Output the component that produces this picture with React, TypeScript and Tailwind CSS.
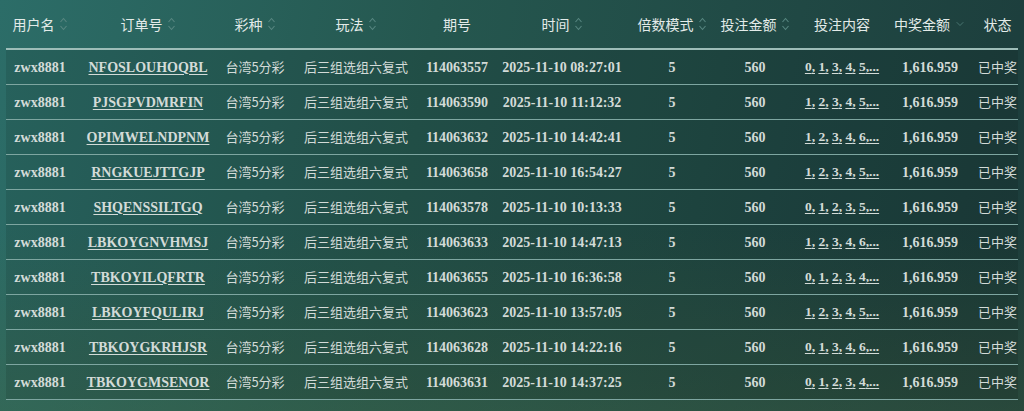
import { ChevronDown } from 'lucide-react';

type Row = {
  user: string;
  order: string;
  issue: string;
  time: string;
  nums: string[];
};

const rows: Row[] = [
  { user: 'zwx8881', order: 'NFOSLOUHOQBL', issue: '114063557', time: '2025-11-10 08:27:01', nums: ['0', '1', '3', '4', '5'] },
  { user: 'zwx8881', order: 'PJSGPVDMRFIN', issue: '114063590', time: '2025-11-10 11:12:32', nums: ['1', '2', '3', '4', '5'] },
  { user: 'zwx8881', order: 'OPIMWELNDPNM', issue: '114063632', time: '2025-11-10 14:42:41', nums: ['1', '2', '3', '4', '6'] },
  { user: 'zwx8881', order: 'RNGKUEJTTGJP', issue: '114063658', time: '2025-11-10 16:54:27', nums: ['1', '2', '3', '4', '5'] },
  { user: 'zwx8881', order: 'SHQENSSILTGQ', issue: '114063578', time: '2025-11-10 10:13:33', nums: ['0', '1', '2', '3', '5'] },
  { user: 'zwx8881', order: 'LBKOYGNVHMSJ', issue: '114063633', time: '2025-11-10 14:47:13', nums: ['1', '2', '3', '4', '6'] },
  { user: 'zwx8881', order: 'TBKOYILQFRTR', issue: '114063655', time: '2025-11-10 16:36:58', nums: ['0', '1', '2', '3', '4'] },
  { user: 'zwx8881', order: 'LBKOYFQULIRJ', issue: '114063623', time: '2025-11-10 13:57:05', nums: ['1', '2', '3', '4', '5'] },
  { user: 'zwx8881', order: 'TBKOYGKRHJSR', issue: '114063628', time: '2025-11-10 14:22:16', nums: ['0', '1', '3', '4', '6'] },
  { user: 'zwx8881', order: 'TBKOYGMSENOR', issue: '114063631', time: '2025-11-10 14:37:25', nums: ['0', '1', '2', '3', '4'] },
];

const cols = 'grid grid-cols-[68px_148px_66px_136px_66px_144px_76px_90px_84px_92px_43px]';

function SortIcon() {
  return (
    <svg width="9" height="16" viewBox="0 0 9 16" className="ml-1 shrink-0" fill="none" stroke="#578680" strokeWidth="1.1">
      <path d="M1.5 6 L4.5 2.5 L7.5 6" />
      <path d="M1.5 10 L4.5 13.5 L7.5 10" />
    </svg>
  );
}

function Head({ label, sort, desc }: { label: string; sort?: boolean; desc?: boolean }) {
  return (
    <div className="flex items-center justify-center">
      <span>{label}</span>
      {sort && <SortIcon />}
      {desc && <ChevronDown className="ml-1 h-3 w-3 text-[#578680]" strokeWidth={1.5} />}
    </div>
  );
}

export default function App() {
  return (
    <div className="h-[411px] w-full overflow-hidden bg-[linear-gradient(to_top,rgba(70,100,60,0.3),transparent_45%),linear-gradient(100deg,#2c6d68_0%,#25574f_40%,#1c3c3b_100%)] px-[6px] font-['Liberation_Serif','Noto_Sans_CJK_SC',serif]">
      <div className={`${cols} h-[50px] border-b-2 border-[#9dbdb8] text-[14px] text-[#e3ebe9] font-['Noto_Sans_CJK_SC',sans-serif]`}>
        <Head label="用户名" sort />
        <Head label="订单号" sort />
        <Head label="彩种" sort />
        <Head label="玩法" sort />
        <Head label="期号" />
        <Head label="时间" sort />
        <Head label="倍数模式" sort />
        <Head label="投注金额" sort />
        <Head label="投注内容" />
        <Head label="中奖金额" desc />
        <Head label="状态" />
      </div>

      {rows.map((r) => (
        <div
          key={r.order}
          className={`${cols} h-[35px] items-center border-b border-[#7ea6a1] bg-black/10 text-center text-[14px] font-bold text-[#d3dbd8]`}
        >
          <div>{r.user}</div>
          <div>
            <span className="underline underline-offset-2 decoration-1">{r.order}</span>
          </div>
          <div className="font-normal font-['Noto_Sans_CJK_SC',sans-serif] text-[13px]">台湾5分彩</div>
          <div className="font-normal font-['Noto_Sans_CJK_SC',sans-serif] text-[13px]">后三组选组六复式</div>
          <div>{r.issue}</div>
          <div>{r.time}</div>
          <div>5</div>
          <div>560</div>
          <div className="whitespace-nowrap text-[13.5px]">
            {r.nums.map((n, i) => (
              <span key={i}>
                <span className="underline underline-offset-2 decoration-1">{n},</span>
                {i < r.nums.length - 1 ? ' ' : ''}
              </span>
            ))}
            <span className="underline underline-offset-2 decoration-1">...</span>
          </div>
          <div>1,616.959</div>
          <div className="font-normal font-['Noto_Sans_CJK_SC',sans-serif] text-[13px]">已中奖</div>
        </div>
      ))}
    </div>
  );
}
